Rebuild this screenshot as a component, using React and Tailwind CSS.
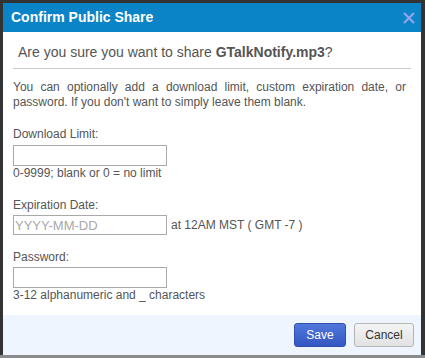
export default function App() {
  return (
    <div className="w-[425px] h-[358px] bg-[#8a8a8a] overflow-hidden" style={{ fontFamily: '"Liberation Sans", Arial, sans-serif' }}>
      <div className="w-[425px] h-[355px] pt-[3px] pl-[3px] bg-[#333]">
        <div className="w-[418px] h-[352px] bg-white flex flex-col">
          <div className="h-[29px] bg-[#0b84c7] flex items-center justify-between pl-[8px] pr-[6px]">
            <span className="text-white font-bold text-[14px]">Confirm Public Share</span>
            <svg width="12" height="12" viewBox="0 0 12 12">
              <path d="M1 1 L11 11 M11 1 L1 11" stroke="#93a4ec" strokeWidth="2.2" />
            </svg>
          </div>
          <div className="flex-1 px-[10px] text-[#555]">
            <div className="pt-[12px] pl-[5px] text-[14px] leading-[17px] h-[37px] border-b border-[#cccccc]">
              Are you sure you want to share <b>GTalkNotify.mp3</b>?
            </div>
            <p className="mt-[11px] pr-[5px] text-[12px] leading-[15px] text-justify">
              You can optionally add a download limit, custom expiration date, or password. If you don't want to simply leave them blank.
            </p>
            <div className="mt-[17px] text-[12px] leading-[15px]">Download Limit:</div>
            <input className="mt-[3px] block w-[154px] h-[21px] border border-[#a9a9a9] outline-none" />
            <div className="text-[12px] leading-[15px]">0-9999; blank or 0 = no limit</div>
            <div className="mt-[17px] text-[12px] leading-[15px]">Expiration Date:</div>
            <div className="mt-[2px] flex items-center gap-[4px]">
              <input placeholder="YYYY-MM-DD" className="block w-[154px] h-[20px] border border-[#a9a9a9] px-[1px] text-[13px] placeholder-[#a8a8a8] outline-none" />
              <span className="text-[12px]">at 12AM MST ( GMT -7 )</span>
            </div>
            <div className="mt-[15px] text-[12px] leading-[15px]">Password:</div>
            <input className="mt-[2px] block w-[154px] h-[21px] border border-[#a9a9a9] outline-none" />
            <div className="text-[12px] leading-[15px]">3-12 alphanumeric and _ characters</div>
          </div>
          <div className="h-[40px] bg-[#eef5ff] flex items-center justify-end gap-[8px] pr-[7px]">
            <button className="w-[52px] h-[24px] rounded-[3px] border border-[#2f4eb0] bg-gradient-to-b from-[#5078dc] to-[#3456c2] text-white text-[12px]">Save</button>
            <button className="w-[60px] h-[24px] rounded-[3px] border border-[#b5b5b5] bg-gradient-to-b from-[#f4f4f4] to-[#e2e2e2] text-[#333] text-[12px]">Cancel</button>
          </div>
        </div>
      </div>
    </div>
  );
}
